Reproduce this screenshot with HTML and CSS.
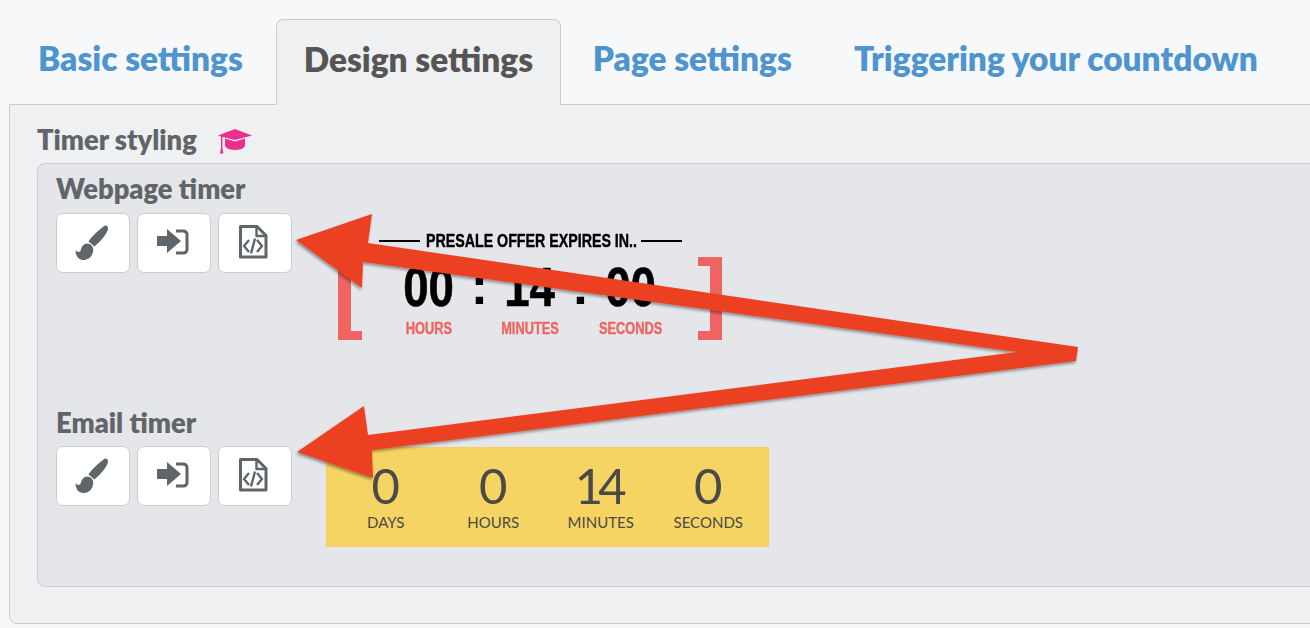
FILE: index.html
```html
<!DOCTYPE html>
<html lang="en">
<head>
    <meta charset="UTF-8">
    <title>Design settings</title>
    <link rel="stylesheet" href="styles.css">
</head>
<body>
<div class="tabs">
    <a class="tab">Basic settings</a>
    <a class="tab active">Design settings</a>
    <a class="tab">Page settings</a>
    <a class="tab">Triggering your countdown</a>
</div>
<div class="panel">
    <div class="styling-title">
        <span>Timer styling</span>
        <svg class="cap" viewBox="0 0 34 25"><path d="M17 0 34 6.500 17 11 5 8 4.400 8.200V19L5.500 24.500H2L3 19V7.600L0 6.500Z"/><path d="M7 9.500 17 12.500 27 9.500V17C25 20 21 21 17 21 13 21 9 20 7 17Z"/></svg>
    </div>
    <div class="box">
        <h3 class="timer-name">Webpage timer</h3>
        <div class="timer-row">
            <div class="buttons">
                <button class="icon-btn"><svg viewBox="0 0 36 36"><path d="M28.500 1.500C30.500 -.5 33.500 1 33 4 32 9 26 16 19.500 21.500L13.500 16.500C17 11 24 5 28.500 1.500Z"/><path d="M12 18.500C17 18.500 19 23 18 27 17 32 13 35 8.500 35 3.500 35 .5 31 .5 25 1.500 27 4 27.500 5.500 26 6.500 22 8 19 12 18.500Z"/></svg></button>
                <button class="icon-btn"><svg viewBox="0 0 36 36"><path d="M1 11H11V4L25 16 11 28V21H1Z"/><path class="line" d="M20 6H27Q31 6 31 10V24Q31 28 27 28H20"/></svg></button>
                <button class="icon-btn"><svg viewBox="0 0 36 36"><path class="line" d="M3.500 1.500H20L29 10.500V32H3.500Z"/><path class="line thin" d="M19.500 2V11H29M12 15 7 21 12 27M20 15 25 21 20 27M18 13.500 14 28.500"/></svg></button>
            </div>
            <div class="web-timer">
                <div class="web-title"><span class="rule"></span><span class="web-text">PRESALE OFFER EXPIRES IN..</span><span class="rule"></span></div>
                <div class="web-body">
                    <div class="web-col"><b>00</b><span>HOURS</span></div>
                    <div class="web-sep">:</div>
                    <div class="web-col"><b>14</b><span>MINUTES</span></div>
                    <div class="web-sep">:</div>
                    <div class="web-col"><b>00</b><span>SECONDS</span></div>
                </div>
            </div>
        </div>
        <h3 class="timer-name email">Email timer</h3>
        <div class="timer-row">
            <div class="buttons">
                <button class="icon-btn"><svg viewBox="0 0 36 36"><path d="M28.500 1.500C30.500 -.5 33.500 1 33 4 32 9 26 16 19.500 21.500L13.500 16.500C17 11 24 5 28.500 1.500Z"/><path d="M12 18.500C17 18.500 19 23 18 27 17 32 13 35 8.500 35 3.500 35 .5 31 .5 25 1.500 27 4 27.500 5.500 26 6.500 22 8 19 12 18.500Z"/></svg></button>
                <button class="icon-btn"><svg viewBox="0 0 36 36"><path d="M1 11H11V4L25 16 11 28V21H1Z"/><path class="line" d="M20 6H27Q31 6 31 10V24Q31 28 27 28H20"/></svg></button>
                <button class="icon-btn"><svg viewBox="0 0 36 36"><path class="line" d="M3.500 1.500H20L29 10.500V32H3.500Z"/><path class="line thin" d="M19.500 2V11H29M12 15 7 21 12 27M20 15 25 21 20 27M18 13.500 14 28.500"/></svg></button>
            </div>
            <div class="mail-timer">
                <div class="mail-col"><b>0</b><span>DAYS</span></div>
                <div class="mail-col"><b>0</b><span>HOURS</span></div>
                <div class="mail-col"><b>14</b><span>MINUTES</span></div>
                <div class="mail-col"><b>0</b><span>SECONDS</span></div>
            </div>
        </div>
    </div>
</div>
<svg class="arrows" viewBox="0 0 1310 628">
    <defs>
        <filter id="shadow" x="-5%" y="-5%" width="110%" height="115%">
            <feDropShadow dx="-1" dy="2" stdDeviation="1.500" flood-color="#000" flood-opacity=".4"/>
        </filter>
    </defs>
    <polygon filter="url(#shadow)" points="296,240 372,214 368,243 1078,347 1076,361 372,450 373,478 297,452 364,406 368,435 1017,352 363,262 362,288"/>
</svg>
</body>
</html>
```

FILE: styles.css
```css
*{
    margin: 0;
    padding: 0;
    box-sizing: border-box;
}
html,body{
    height: 628px;
    overflow: hidden;
}
body{
    position: relative;
    background: #f7f8fa;
    font-family: "Lato", "Liberation Sans", sans-serif;
    font-weight: 800;
}
.tabs{
    display: flex;
    height: 105px;
    padding: 19px 0 0 8px;
    font-size: 33.400px;
    position: relative;
    z-index: 1;
}
.tab{
    display: block;
    height: 86px;
    padding: 19px 32px 0 30px;
    color: #4e94cf;
    white-space: nowrap;
}
.tab.active{
    width: 285px;
    padding: 19px 0 0;
    margin: 0 2px 0 1px;
    text-align: center;
    color: #555;
    background: #eff0f2;
    border: 1px solid #ccc;
    border-bottom: none;
    border-radius: 7px 7px 0 0;
}
.panel{
    margin: -1px 0 0 9px;
    width: 1330px;
    height: 520px;
    padding: 20px 0 0 27px;
    background: #eff0f2;
    border: 1px solid #ccc;
    border-radius: 0 0 0 8px;
}
.styling-title{
    display: flex;
    align-items: center;
    gap: 21px;
    height: 29px;
    font-size: 27.300px;
    color: #5f6568;
}
.cap{
    width: 34px;
    height: 25px;
    fill: #ec2f8c;
    margin-top: 3px;
}
.box{
    margin-top: 9px;
    height: 424px;
    padding: 10px 0 0 18px;
    background: #e5e6ea;
    border: 1px solid #ccc;
    border-radius: 8px 0 0 8px;
}
.timer-name{
    height: 30px;
    margin-bottom: 9px;
    font-size: 27.300px;
    line-height: 30px;
    font-weight: 800;
    color: #5f6568;
}
.timer-name.email{
    margin-bottom: 8px;
}
.timer-row{
    display: flex;
    height: 195px;
}
.timer-row:last-child{
    height: 100px;
}
.buttons{
    display: flex;
    gap: 7px;
}
.icon-btn{
    width: 74px;
    height: 60px;
    background: #fff;
    border: 1px solid #ccc;
    border-radius: 7px;
    display: flex;
    align-items: center;
    justify-content: center;
}
.icon-btn svg{
    width: 36px;
    height: 36px;
    fill: #5f6568;
    overflow: visible;
}
.icon-btn .line{
    fill: none;
    stroke: #5f6568;
    stroke-width: 3;
    stroke-linejoin: round;
}
.icon-btn .thin{
    stroke-width: 2.400;
}
.web-timer{
    margin: 18px 0 0 46px;
    width: 384px;
    font-family: "Liberation Sans", sans-serif;
    font-weight: 700;
}
.web-title{
    display: flex;
    align-items: center;
    justify-content: center;
    height: 20px;
    font-size: 18px;
    color: #000;
}
.web-text{
    width: 214px;
    margin: 0 1px 0 6px;
    white-space: nowrap;
    transform: scaleX(.79);
    transform-origin: 0 50%;
    -webkit-text-stroke: .4px #000;
}
.rule{
    width: 41px;
    height: 2px;
    background: #000;
}
.web-body{
    display: flex;
    justify-content: center;
    margin-top: 6px;
    height: 83px;
    border-left: 24px solid transparent;
    border-right: 24px solid transparent;
    background:
        linear-gradient(#ef6360,#ef6360) 0 0/24px 9px no-repeat border-box,
        linear-gradient(#ef6360,#ef6360) 0 100%/24px 9px no-repeat border-box,
        linear-gradient(#ef6360,#ef6360) 0 0/13px 100% no-repeat border-box,
        linear-gradient(#ef6360,#ef6360) 100% 0/24px 9px no-repeat border-box,
        linear-gradient(#ef6360,#ef6360) 100% 100%/24px 9px no-repeat border-box,
        linear-gradient(#ef6360,#ef6360) 100% 0/12px 100% no-repeat border-box;
}
.web-col{
    width: 80px;
    display: flex;
    flex-direction: column;
    align-items: center;
}
.web-col b{
    font-size: 55px;
    line-height: 50px;
    margin-top: 5px;
    color: #000;
    transform: scaleX(.83);
    -webkit-text-stroke: .6px #000;
}
.web-col span{
    font-size: 16px;
    line-height: 20px;
    margin-top: 7px;
    color: #ef6360;
    transform: scaleX(.8);
    -webkit-text-stroke: .4px #ef6360;
}
.web-sep{
    width: 21px;
    text-align: center;
    font-size: 52px;
    line-height: 58px;
    color: #000;
}
.mail-timer{
    display: flex;
    margin: 1px 0 0 34px;
    width: 443px;
    height: 100px;
    padding: 12px 6px 0 5px;
    background: #f6d463;
    border: 1px solid #f3d060;
    font-family: "Lato", "Liberation Sans", sans-serif;
    font-weight: 400;
    color: #4a4a48;
}
.mail-col{
    flex: 1;
    display: flex;
    flex-direction: column;
    align-items: center;
}
.mail-col b{
    font-weight: 400;
    font-size: 49px;
    line-height: 50px;
    letter-spacing: -5px;
    margin-left: -5px;
}
.mail-col span{
    font-size: 15px;
    line-height: 20px;
    margin-top: 2px;
}
.arrows{
    position: absolute;
    left: 0;
    top: 0;
    width: 1310px;
    height: 628px;
    z-index: 2;
    fill: #ec4124;
}
```
